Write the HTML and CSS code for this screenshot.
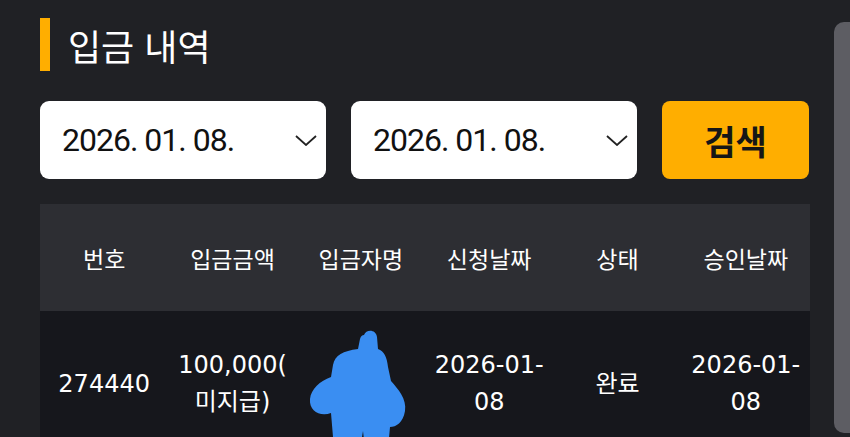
FILE: index.html
```html
<!DOCTYPE html>
<html lang="ko">
<head>
    <meta charset="UTF-8">
    <meta name="viewport" content="width=device-width, initial-scale=1.0">
    <title>입금 내역</title>
    <link rel="stylesheet" href="styles.css">
</head>
<body>
    <div class="page">
        <div class="title">
            <span class="title-bar"></span>
            <h1>입금 내역</h1>
        </div>

        <div class="filters">
            <div class="date-box">
                <span>2026. 01. 08.</span>
                <svg class="chevron" width="22" height="11" viewBox="0 0 22 11">
                    <path d="M1 1 L11 10 L21 1" fill="none" stroke="#222" stroke-width="1.8"/>
                </svg>
            </div>
            <div class="date-box">
                <span>2026. 01. 08.</span>
                <svg class="chevron" width="22" height="11" viewBox="0 0 22 11">
                    <path d="M1 1 L11 10 L21 1" fill="none" stroke="#222" stroke-width="1.8"/>
                </svg>
            </div>
            <button class="search-btn">검색</button>
        </div>

        <table class="history">
            <thead>
                <tr>
                    <th>번호</th>
                    <th>입금금액</th>
                    <th>입금자명</th>
                    <th>신청날짜</th>
                    <th>상태</th>
                    <th>승인날짜</th>
                </tr>
            </thead>
            <tbody>
                <tr>
                    <td>274440</td>
                    <td>100,000(미지급)</td>
                    <td class="masked">
                        <svg class="scribble" width="120" height="125" viewBox="300 325 120 125">
                            <path d="M366 336 C368 330 378 330 379 338 L380 350 C386 352 389 358 390 368 L393 382 C400 390 409 400 407 412 C405 424 398 428 392 428 L390 450 L367 450 L365 432 L362 450 L336 450 L333 414 C322 418 311 412 312 400 C313 390 322 382 333 378 L335 366 C337 356 345 352 360 350 L362 340 C363 337 364 336 366 336 Z" fill="#3a8ef2"/>
                        </svg>
                    </td>
                    <td>2026-01-08</td>
                    <td>완료</td>
                    <td>2026-01-08</td>
                </tr>
            </tbody>
        </table>
    </div>
    <div class="scroll-thumb"></div>
</body>
</html>
```

FILE: styles.css
```css
body {
    margin: 0;
    background-color: #202125;
    font-family: "Noto Sans CJK KR", "Noto Sans", sans-serif;
    color: #fff;
    overflow: hidden;
}

.page {
    width: 770px;
    padding: 18px 40px 0;
}

.title {
    display: flex;
    align-items: center;
    height: 53px;
    margin-bottom: 30px;
}

.title-bar {
    width: 10px;
    height: 53px;
    background-color: #ffae00;
    margin-right: 18px;
}

.title h1 {
    margin: 0;
    font-size: 36px;
    font-weight: 400;
    line-height: 1;
}

.filters {
    display: flex;
    gap: 25px;
    height: 78px;
    margin-bottom: 25px;
}

.date-box {
    width: 286px;
    box-sizing: border-box;
    background-color: #fff;
    border-radius: 9px;
    padding: 0 9px 0 22px;
    display: flex;
    align-items: center;
    justify-content: space-between;
    font-family: Roboto, "Liberation Sans", sans-serif;
    font-size: 32px;
    letter-spacing: -1px;
    color: #111;
}

.chevron {
    display: block;
}

.search-btn {
    width: 147px;
    border: none;
    border-radius: 8px;
    background-color: #ffae00;
    color: #161616;
    font-family: "Noto Sans CJK KR", sans-serif;
    font-size: 34px;
    font-weight: 700;
    padding: 0;
}

.history {
    width: 770px;
    table-layout: fixed;
    border-collapse: collapse;
    text-align: center;
}

.history th {
    height: 107px;
    background-color: #2d2e33;
    font-size: 23px;
    font-weight: 400;
    padding: 0;
}

.history td {
    height: 146px;
    background-color: #16171c;
    font-family: "DejaVu Sans", "Noto Sans CJK KR", sans-serif;
    font-size: 24px;
    line-height: 37px;
    padding: 0 6px;
    line-break: anywhere;
}

.history td.masked {
    position: relative;
}

.scribble {
    position: absolute;
    left: 1px;
    top: 13px;
}

.scroll-thumb {
    position: fixed;
    top: 22px;
    right: 0;
    width: 16px;
    height: 411px;
    background-color: #5d5d63;
    border-radius: 10px 0 0 10px;
}
```
